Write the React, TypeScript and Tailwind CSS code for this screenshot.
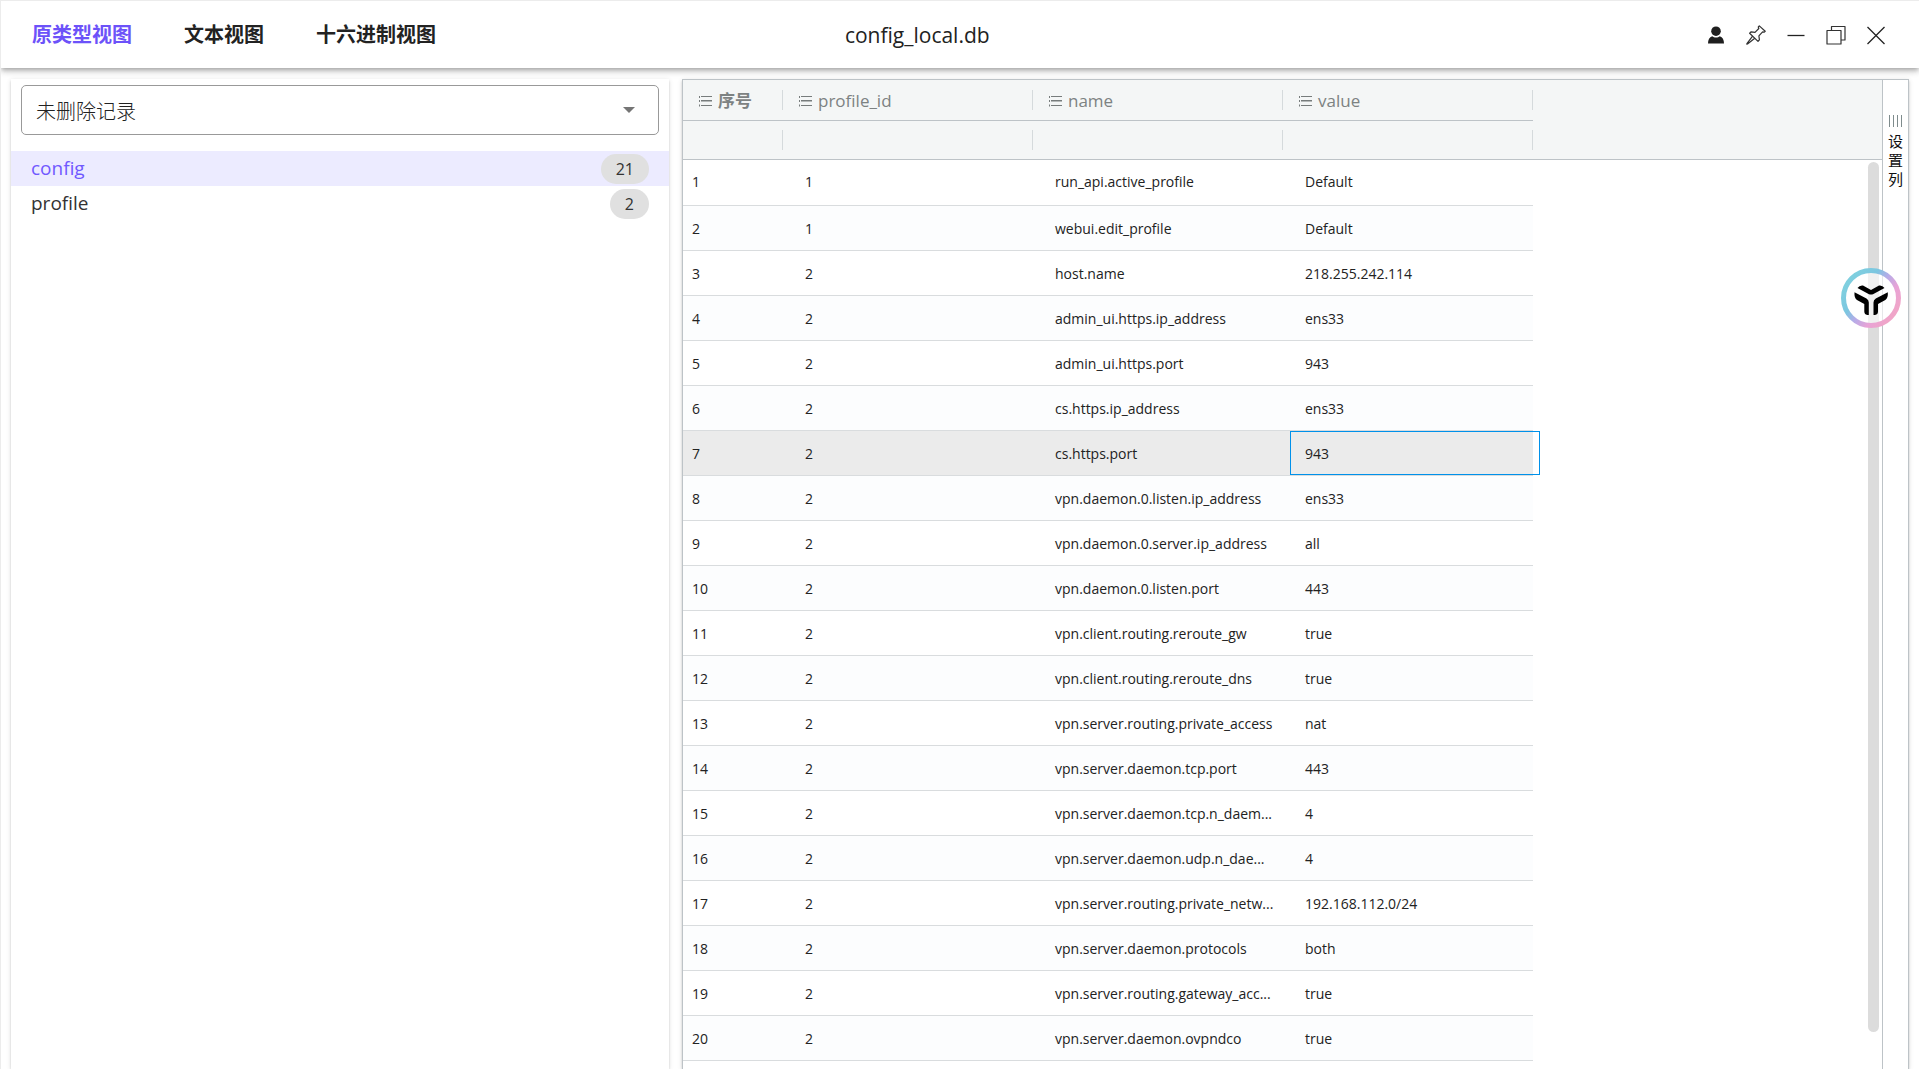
import React from "react";

interface RecordRow {
  id: number;
  profileId: number;
  name: string;
  value: string;
}

const tabs = ["原类型视图", "文本视图", "十六进制视图"];

const tables = [
  { name: "config", count: 21 },
  { name: "profile", count: 2 },
];

const columns = ["序号", "profile_id", "name", "value"];

const rows: RecordRow[] = [
  { id: 1, profileId: 1, name: "run_api.active_profile", value: "Default" },
  { id: 2, profileId: 1, name: "webui.edit_profile", value: "Default" },
  { id: 3, profileId: 2, name: "host.name", value: "218.255.242.114" },
  { id: 4, profileId: 2, name: "admin_ui.https.ip_address", value: "ens33" },
  { id: 5, profileId: 2, name: "admin_ui.https.port", value: "943" },
  { id: 6, profileId: 2, name: "cs.https.ip_address", value: "ens33" },
  { id: 7, profileId: 2, name: "cs.https.port", value: "943" },
  { id: 8, profileId: 2, name: "vpn.daemon.0.listen.ip_address", value: "ens33" },
  { id: 9, profileId: 2, name: "vpn.daemon.0.server.ip_address", value: "all" },
  { id: 10, profileId: 2, name: "vpn.daemon.0.listen.port", value: "443" },
  { id: 11, profileId: 2, name: "vpn.client.routing.reroute_gw", value: "true" },
  { id: 12, profileId: 2, name: "vpn.client.routing.reroute_dns", value: "true" },
  { id: 13, profileId: 2, name: "vpn.server.routing.private_access", value: "nat" },
  { id: 14, profileId: 2, name: "vpn.server.daemon.tcp.port", value: "443" },
  { id: 15, profileId: 2, name: "vpn.server.daemon.tcp.n_daem...", value: "4" },
  { id: 16, profileId: 2, name: "vpn.server.daemon.udp.n_dae...", value: "4" },
  { id: 17, profileId: 2, name: "vpn.server.routing.private_netw...", value: "192.168.112.0/24" },
  { id: 18, profileId: 2, name: "vpn.server.daemon.protocols", value: "both" },
  { id: 19, profileId: 2, name: "vpn.server.routing.gateway_acc...", value: "true" },
  { id: 20, profileId: 2, name: "vpn.server.daemon.ovpndco", value: "true" },
];

const SELECTED_ROW = 7;

const MenuIcon = () => (
  <svg width="13" height="14" viewBox="0 0 13 14" fill="#777c7c" className="flex-shrink-0">
    <path d="M0 3h1v2H0zM2 3h11v1H2zM0 7h1v2H0zM2 7h11v1.500H2zM0 11.500h1v2H0zM2 12h11v1H2z" />
  </svg>
);

const windowButtons = [
  {
    label: "用户",
    icon: (
      <svg width="20" height="20" viewBox="0 0 20 20" fill="#1f1f1f">
        <circle cx="10" cy="6.2" r="4.8" />
        <path d="M2 18.6c0-4 1.4-6.6 4.2-7.4 2 1.7 5.6 1.7 7.6 0 2.8.8 4.2 3.4 4.2 7.4z" />
      </svg>
    ),
  },
  {
    label: "置顶",
    icon: (
      <svg width="20" height="20" viewBox="0 0 20 20" fill="none" stroke="#333" strokeWidth="1.2" strokeLinejoin="round">
        <path d="M13.3.9 19.2 6.3 18.1 7.2 16.6 6.9 12.9 10.9 13.4 14.8 12 16.4 3.6 8.3 5.2 6.8 9 7.3 12.8 3.5 12.3 2z" />
        <path d="M6.6 11.2.9 18.6.8 19.2 1.5 19 8.8 13.3" />
      </svg>
    ),
  },
  {
    label: "最小化",
    icon: (
      <svg width="20" height="20" viewBox="0 0 20 20" stroke="#222" strokeWidth="1.3">
        <path d="M1.5 10.5h17" />
      </svg>
    ),
  },
  {
    label: "还原",
    icon: (
      <svg width="20" height="20" viewBox="0 0 20 20" fill="none" stroke="#333" strokeWidth="1.2" strokeLinejoin="round">
        <path d="M1 5.5h14V19H1z" />
        <path d="M5.5 5.5v-4H19V15h-4" />
      </svg>
    ),
  },
  {
    label: "关闭",
    icon: (
      <svg width="20" height="20" viewBox="0 0 20 20" stroke="#222" strokeWidth="1.3">
        <path d="M1.5 2l17 17M18.5 2l-17 17" />
      </svg>
    ),
  },
];

const Header = () => (
  <header className="relative z-10 flex h-[68px] flex-shrink-0 items-center border-t border-[#ececec] bg-white shadow-[0_2px_4px_-1px_rgba(0,0,0,0.2),0_4px_5px_0_rgba(0,0,0,0.14),0_1px_10px_0_rgba(0,0,0,0.12)]">
    <nav className="flex w-[44%] gap-[52px] pl-[31px]">
      {tabs.map((tab, i) => (
        <button
          key={tab}
          className={`whitespace-nowrap text-xl font-bold ${i === 0 ? "text-[#6c52f9]" : "text-[#222]"}`}
        >
          {tab}
        </button>
      ))}
    </nav>
    <h1 className="pt-[3px] text-[21px] text-[#222]">config_local.db</h1>
    <div className="ml-auto mr-[33px] flex gap-5">
      {windowButtons.map((b) => (
        <button key={b.label} aria-label={b.label}>
          {b.icon}
        </button>
      ))}
    </div>
  </header>
);

const TablePanel = () => (
  <aside className="w-[658px] flex-shrink-0 bg-white pt-[6px] shadow-[0_3px_1px_-2px_rgba(0,0,0,0.2),0_2px_2px_0_rgba(0,0,0,0.14),0_1px_5px_0_rgba(0,0,0,0.12)]">
    <div className="relative mx-[10px] mb-4">
      <select
        aria-label="记录类型"
        className="h-[50px] w-full appearance-none rounded-[5px] border border-[#999] bg-white pl-[14px] pt-[3px] text-xl font-light text-[#222]"
      >
        <option>未删除记录</option>
      </select>
      <svg className="pointer-events-none absolute right-6 top-[22px]" width="12" height="6" viewBox="0 0 12 6" fill="#757575">
        <path d="M0 0h12L6 6z" />
      </svg>
    </div>
    <ul>
      {tables.map((t, i) => (
        <li key={t.name}>
          <button
            className={`flex h-[35px] w-full items-center justify-between pl-5 pr-5 text-[19px] ${
              i === 0 ? "bg-[#ecebff] text-[#7059ff]" : "text-[#333]"
            }`}
          >
            <span>{t.name}</span>
            <span className="rounded-full bg-[#e0e0e0] px-[15px] text-base leading-[30px] text-[#333]">{t.count}</span>
          </button>
        </li>
      ))}
    </ul>
  </aside>
);

const Separator = () => <i className="ml-auto h-5 w-px bg-[#d5dadc]" />;

const DataGrid = () => (
  <div className="relative min-w-0 flex-1 overflow-hidden">
    <table className="w-full table-fixed border-separate border-spacing-0 text-sm text-[#222]">
      <colgroup>
        <col className="w-[100px]" />
        <col className="w-[250px]" />
        <col className="w-[250px]" />
        <col className="w-[250px]" />
        <col />
      </colgroup>
      <thead className="bg-[#f4f6f6] text-[17px] leading-6 text-[#7d8282]">
        <tr className="h-[41px]">
          {columns.map((c) => (
            <th key={c} className="border-b border-[#bdc3c7] p-0 font-medium first:font-bold">
              <div className="flex items-center gap-[6px] pl-4">
                <MenuIcon />
                <span className="pt-[2px]">{c}</span>
                <Separator />
              </div>
            </th>
          ))}
          <td />
        </tr>
        <tr className="h-[39px]">
          {columns.map((c) => (
            <td key={c} className="border-b border-[#bdc3c7] p-0">
              <div className="flex">
                <Separator />
              </div>
            </td>
          ))}
          <td className="border-b border-[#bdc3c7]" />
        </tr>
      </thead>
      <tbody>
        {rows.map((r) => {
          const cell = "border-b border-[#d9dcde] pl-[22px] pr-1 whitespace-nowrap";
          return (
            <tr
              key={r.id}
              className={`h-[45px] [&>td]:pt-[2px] [&>td]:pb-0 first:h-[46px] first:[&>td]:pt-0 first:[&>td]:pb-[2px] ${
                r.id === SELECTED_ROW ? "[&>td:not(:last-child)]:bg-[#ebebeb]" : "even:[&>td:not(:last-child)]:bg-[#fcfdfe]"
              }`}
            >
              <td className="border-b border-[#d9dcde] pl-[9px]">{r.id}</td>
              <td className={cell}>{r.profileId}</td>
              <td className={cell}>{r.name}</td>
              <td className={`relative ${cell}`}>
                {r.value}
                {r.id === SELECTED_ROW && (
                  <span className="absolute inset-y-0 left-[7px] w-full border border-[#0091ea]" />
                )}
              </td>
              <td />
            </tr>
          );
        })}
      </tbody>
    </table>
    <div className="absolute bottom-[37px] right-[3px] top-[82px] w-[11px] rounded-full bg-[#dcdcdc]" />
  </div>
);

const ColumnToolbar = () => (
  <div className="w-[26px] flex-shrink-0 border-l border-[#bdc3c7]">
    <button className="mx-auto mt-[35px] flex w-[15px] flex-col items-center gap-[5px] text-[15px] leading-[19px] text-[#111]">
      <svg width="14" height="12" viewBox="0 0 14 12" fill="#7f8c8d">
        <path d="M0 0h1v12H0zM4 0h1v12H4zM8 0h1v12H8zM12 0h1v12H12z" />
      </svg>
      <span className="break-all">设置列</span>
    </button>
  </div>
);

const FloatingLogo = () => (
  <button aria-label="助手" className="absolute right-[18px] top-[268px] z-20">
    <svg width="60" height="60" viewBox="0 0 60 60">
      <defs>
        <linearGradient id="ring" x1="0.1" y1="0.2" x2="0.9" y2="0.8">
          <stop offset="0" stopColor="#7fcfdf" />
          <stop offset="0.3" stopColor="#7cc6e0" />
          <stop offset="0.5" stopColor="#b5ace8" />
          <stop offset="0.75" stopColor="#e8a3d6" />
          <stop offset="1" stopColor="#f0a5c8" />
        </linearGradient>
      </defs>
      <circle cx="30" cy="30" r="27.5" fill="#fff" fillOpacity="0.6" stroke="url(#ring)" strokeWidth="5" />
      <g fill="#000">
        <path d="M16.5 20q2-3 5.500-2.500L30 22l8-4.500q3.500-.5 5.500 2.500L32 26.200q-2 .8-4 0z" />
        <path d="M13.500 24.300l12 6.200q2.300 1.500 2.300 4V47h-1.500q-3-.5-3-3.500v-7.500l-7.300-4q-3-2-2.500-7.700z" />
        <path d="M46.800 24.300l-12 6.200q-2.300 1.500-2.300 4V47h1.500q3-.5 3-3.500v-7.500l7.300-4q3-2 2.500-7.700z" />
      </g>
    </svg>
  </button>
);

export default function App() {
  return (
    <div className="relative flex h-screen flex-col overflow-hidden border-l border-[#ececec] bg-white font-['Open_Sans','Noto_Sans_CJK_SC',sans-serif]">
      <Header />
      <main className="relative flex min-h-0 flex-1 gap-[13px] pl-[10px] pr-[10px] pt-[11px]">
        <TablePanel />
        <section className="flex min-w-0 flex-1 border border-b-0 border-[#bdc3c7] bg-white shadow-[0_3px_1px_-2px_rgba(0,0,0,0.2),0_2px_2px_0_rgba(0,0,0,0.14),0_1px_5px_0_rgba(0,0,0,0.12)]">
          <DataGrid />
          <ColumnToolbar />
        </section>
      </main>
      <FloatingLogo />
    </div>
  );
}
